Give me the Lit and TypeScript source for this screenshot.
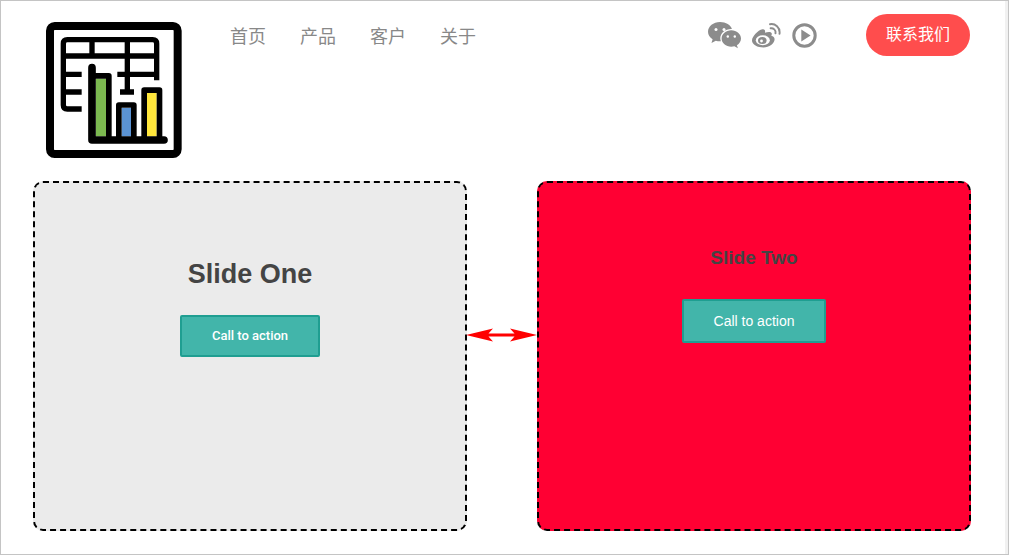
import { html, LitElement, css, svg } from "lit";
import { customElement } from "lit/decorators.js";

const logo = svg`<svg class="logo" viewBox="48 35 408 408" aria-hidden="true">
  <rect x="60" y="47" width="383" height="384" rx="14" fill="#fff" stroke="#000" stroke-width="24"/>
  <g fill="none" stroke="#000" stroke-width="16">
    <path d="M155 296H112q-12 0-12-12V100q0-12 12-12H368q12 0 12 12V210"/>
    <path d="M100 137H380M100 192H155M262 192H380M100 245H155M270 245H312M186 88V137M292 88V250"/>
  </g>
  <path d="M172 190V400H200V150H172Z" fill="#fff"/>
  <path d="M198 205H228V378H198Z" fill="#7cb950"/>
  <path d="M275 293H303V378H275Z" fill="#5b93d3"/>
  <path d="M350 248H380V378H350Z" fill="#ffe63b"/>
  <g fill="none" stroke="#000" stroke-linejoin="round">
    <path stroke-width="23" stroke-linecap="round" d="M186 172V389H402"/>
    <path stroke-width="17" d="M186 196.500H236.500V388"/>
    <path stroke-width="17" d="M266.500 388V284H311.500V388"/>
    <path stroke-width="17" d="M342.500 388V239.500H388.500V388"/>
  </g>
</svg>`;

const wechat = svg`<svg class="icon" width="34" height="27" viewBox="0 0 34 27" aria-hidden="true">
  <path fill="#8c8c8c" d="M12 0C5.400 0 0 4.300 0 9.700c0 3.100 1.800 5.800 4.600 7.600L3.500 21l4.300-2.300c1.300.4 2.700.6 4.200.6h.9c-.4-1-.6-2-.6-3.100 0-5.200 4.900-9.300 11-9.300h.6C22.800 3 17.900 0 12 0z"/>
  <circle cx="8" cy="7.500" r="1.500" fill="#fff"/><circle cx="16" cy="7.500" r="1.500" fill="#fff"/>
  <path fill="#8c8c8c" d="M33 16.500c0-4.500-4.300-8.200-9.700-8.200s-9.700 3.700-9.700 8.200 4.300 8.200 9.700 8.200c1.100 0 2.100-.2 3.100-.4l3.500 2-1-3.100c2.500-1.500 4.100-3.900 4.100-6.700z"/>
  <circle cx="19.800" cy="14.500" r="1.200" fill="#fff"/><circle cx="26.800" cy="14.500" r="1.200" fill="#fff"/>
</svg>`;

const weibo = svg`<svg class="icon" width="30" height="25" viewBox="0 0 30 25" aria-hidden="true">
  <path fill="#8c8c8c" d="M11.500 24.500C5.500 24.500 0 21.700 0 17.500 0 13.500 5.800 7.300 10.500 6.300c2.400-.4 3 1.500 2.400 3.500 2.900-1.100 6-1.300 6.800.5.300.9 0 1.700-.4 2.400 2 .6 3.300 1.800 3.300 3.600 0 4.200-5.500 8.200-11.100 8.200z"/>
  <ellipse cx="10.800" cy="17.300" rx="7" ry="5" fill="#fff"/>
  <ellipse cx="10.300" cy="17.500" rx="4.300" ry="3.600" fill="#8c8c8c"/>
  <circle cx="9.500" cy="18" r="1.400" fill="#fff"/>
  <g fill="none" stroke="#8c8c8c" stroke-linecap="round">
    <path stroke-width="1.900" d="M18 1.200c5-1 10.500 3.200 9.500 9.600"/>
    <path stroke-width="1.900" d="M18.600 5.300c2.700-.4 5.500 1.700 4.900 5"/>
  </g>
</svg>`;

const play = svg`<svg class="icon" width="25" height="25" viewBox="0 0 25 25" aria-hidden="true">
  <circle cx="12.500" cy="12.500" r="10.700" fill="none" stroke="#8c8c8c" stroke-width="3"/>
  <path fill="#8c8c8c" d="M9.300 6.500 18.600 12.500 9.300 18.500Z"/>
</svg>`;

const arrow = svg`<svg class="arrow" width="72" height="14" viewBox="0 0 72 14" aria-hidden="true">
  <path fill="#f00" d="M0 7 27 .5 22.500 5.500H48.500L44 .5 71 7 44 13.500 48.500 8.500H22.500L27 13.500Z"/>
</svg>`;

@customElement("app-root")
export class AppRoot extends LitElement {
  static styles = css`
    :host {
      display: block;
      box-sizing: border-box;
      height: 555px;
      border: 1px solid #c4c4c4;
      border-right: 0;
      background: #fff;
      font-family: "Liberation Sans", "Noto Sans CJK SC", sans-serif;
    }

    .page {
      position: relative;
      height: 100%;
      padding-right: 4px;
      border-right: 1px solid #c4c4c4;
      box-sizing: border-box;
    }

    .gutter {
      position: absolute;
      top: 0;
      right: 0;
      bottom: 0;
      width: 3px;
      background: #f1f1f1;
    }

    .top {
      display: flex;
      align-items: flex-start;
      height: 180px;
      padding: 21px 34px 0 45px;
      box-sizing: border-box;
    }

    .logo {
      display: block;
      width: 136px;
      height: 136px;
      flex: none;
    }

    nav {
      display: flex;
      gap: 34px;
      margin-left: 48px;
      margin-top: -2px;
      font-family: "Noto Sans CJK SC", sans-serif;
      font-size: 18px;
      font-weight: 400;
      line-height: 30px;
      color: #888;
    }

    .socials {
      display: flex;
      align-items: center;
      margin-left: auto;
      height: 27px;
    }

    .icon {
      display: block;
    }

    .socials .icon + .icon {
      margin-left: 10px;
    }

    .contact {
      margin-left: 49px;
      margin-top: -8px;
      width: 104px;
      height: 42px;
      border: 0;
      border-radius: 21px;
      background: #ff4d4d;
      color: #fff;
      font-family: "Noto Sans CJK SC", sans-serif;
      font-size: 16px;
      padding: 0 0 4px;
    }

    .slides {
      position: relative;
      display: flex;
      justify-content: space-between;
      padding: 0 33px 0 32px;
    }

    .slide {
      box-sizing: border-box;
      width: 434px;
      height: 350px;
      border: 2px dashed #000;
      border-radius: 10px;
      display: flex;
      flex-direction: column;
      align-items: center;
    }

    .one {
      background: #ebebeb;
      padding-top: 75px;
    }

    .two {
      background: #f03;
      padding-top: 63px;
    }

    h2 {
      margin: 0;
      color: #444;
      font-weight: 700;
    }

    .one h2 {
      font-size: 27px;
      line-height: 32px;
    }

    .two h2 {
      font-size: 19px;
      line-height: 24px;
    }

    .cta {
      box-sizing: border-box;
      border: 2px solid #1f9e91;
      border-radius: 2px;
      background: #42b5aa;
      color: #fff;
      padding: 0;
    }

    .one .cta {
      width: 140px;
      height: 42px;
      margin-top: 25px;
      padding-bottom: 2px;
      font-size: 13px;
      font-family: Roboto, "Liberation Sans", sans-serif;
      font-weight: 500;
    }

    .two .cta {
      width: 144px;
      height: 44px;
      margin-top: 29px;
      font-size: 14px;
      font-family: "Liberation Sans", sans-serif;
    }

    .arrow {
      position: absolute;
      left: 465px;
      top: 147px;
    }
  `;

  render() {
    return html`<div class="page">
      <div class="gutter"></div>
      <header class="top">
        ${logo}
        <nav>
          <span>首页</span>
          <span>产品</span>
          <span>客户</span>
          <span>关于</span>
        </nav>
        <div class="socials">${wechat}${weibo}${play}</div>
        <button class="contact">联系我们</button>
      </header>
      <main class="slides">
        <section class="slide one">
          <h2>Slide One</h2>
          <button class="cta">Call to action</button>
        </section>
        <section class="slide two">
          <h2>Slide Two</h2>
          <button class="cta">Call to action</button>
        </section>
        ${arrow}
      </main>
    </div>`;
  }
}

declare global {
  interface HTMLElementTagNameMap {
    "app-root": AppRoot;
  }
}
